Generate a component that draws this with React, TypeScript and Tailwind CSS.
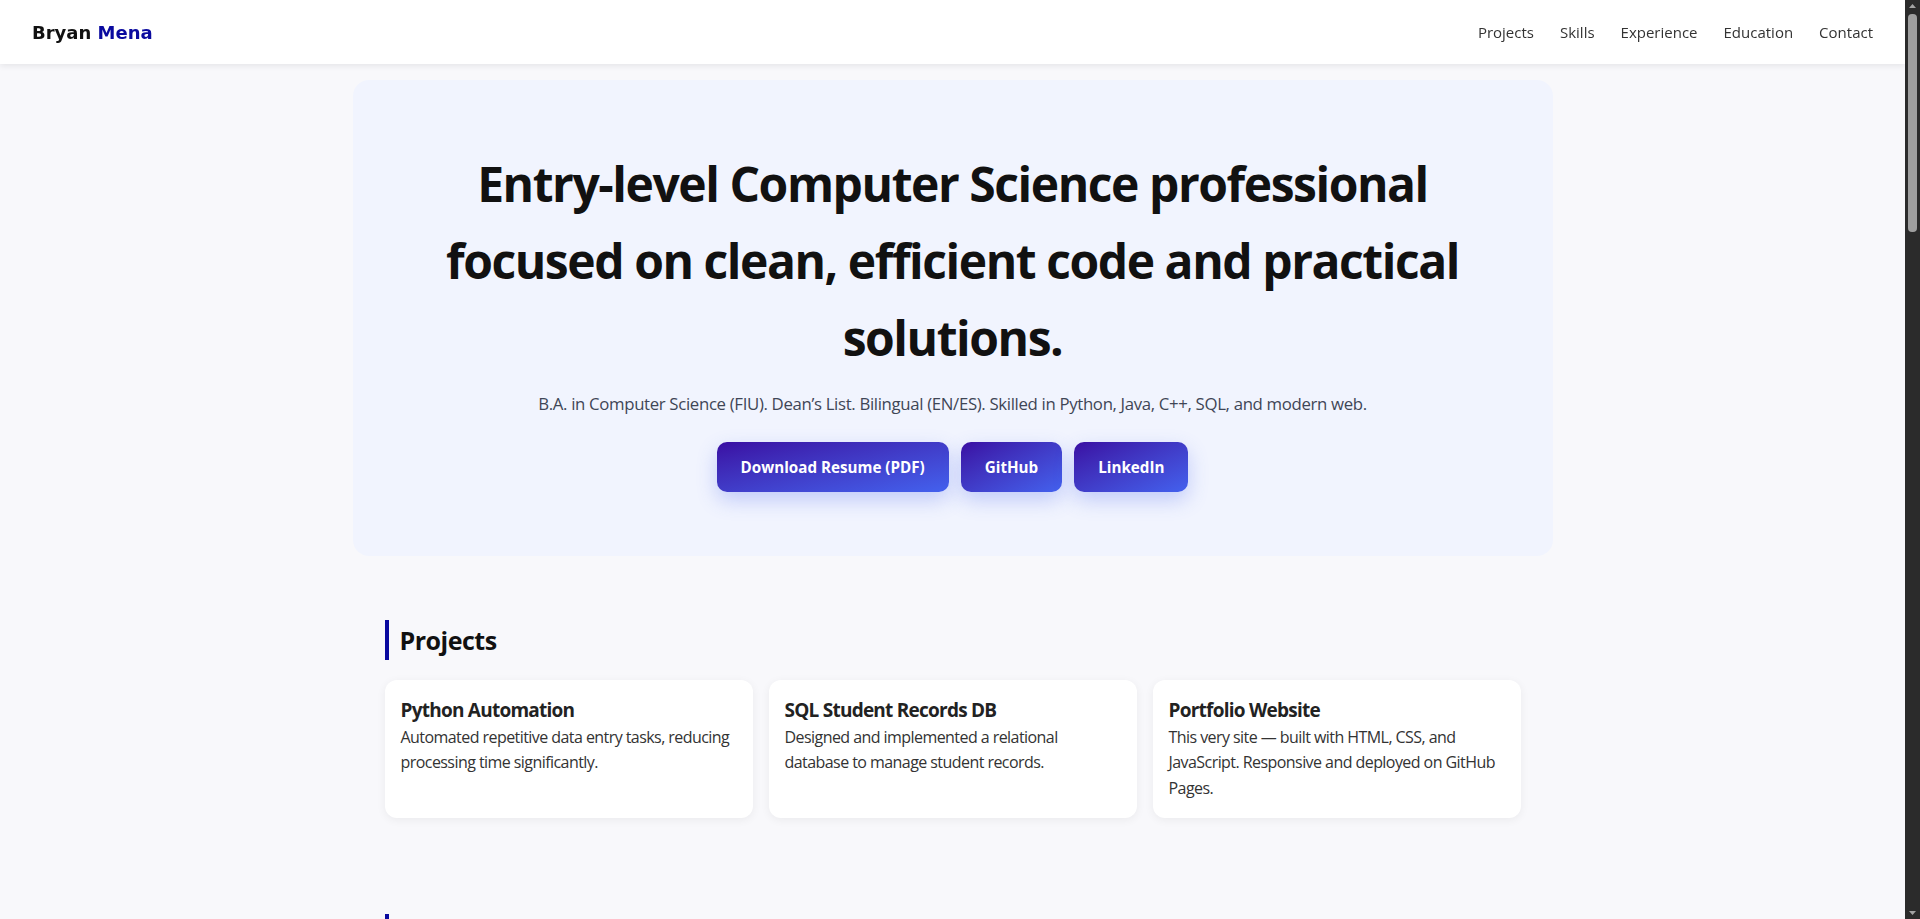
const navLinks = ["Projects", "Skills", "Experience", "Education", "Contact"];

const projects = [
  {
    title: "Python Automation",
    desc: "Automated repetitive data entry tasks, reducing processing time significantly.",
  },
  {
    title: "SQL Student Records DB",
    desc: "Designed and implemented a relational database to manage student records.",
  },
  {
    title: "Portfolio Website",
    desc: "This very site — built with HTML, CSS, and JavaScript. Responsive and deployed on GitHub Pages.",
  },
];

const skills = ["Python", "Java", "C++", "SQL", "HTML", "CSS", "JavaScript", "Git", "Linux", "Data Structures"];

const jobs = [
  {
    title: "IT Support Intern",
    place: "Florida International University",
    desc: "Helped students and staff troubleshoot hardware and software issues, and documented common fixes.",
  },
  {
    title: "Customer Service Associate",
    place: "Retail",
    desc: "Worked with customers in English and Spanish, handled transactions and trained new team members.",
  },
];

function SectionTitle({ children }: { children: string }) {
  return (
    <h2 className="mb-5 border-l-4 border-[#0a0a9f] pl-[11px] text-[25px] font-bold leading-[40px] tracking-[-0.02em] text-[#111]">
      {children}
    </h2>
  );
}

function Card({ title, desc }: { title: string; desc: string }) {
  return (
    <div className="rounded-xl bg-white p-4 shadow-[0_2px_10px_rgba(0,0,0,0.06)]">
      <h3 className="text-[19px] font-bold leading-[1.5] tracking-[-0.04em] text-[#222]">{title}</h3>
      <p className="text-[16px] leading-[1.6] tracking-[-0.035em] text-[#333]">{desc}</p>
    </div>
  );
}

// the window's dark scrollbar on the right edge
function FakeScrollbar() {
  return (
    <div className="flex h-screen w-[15px] shrink-0 flex-col items-center bg-[#2b2b2b]">
      <svg width="9" height="14" viewBox="0 0 9 14" className="shrink-0">
        <path d="M1 8 L4.5 4 L8 8 Z" fill="#a3a3a3" />
      </svg>
      <div className="h-[218px] w-[9px] shrink-0 rounded-[4px] bg-[#9f9f9f]" />
      <div className="flex-1" />
      <svg width="9" height="14" viewBox="0 0 9 14" className="shrink-0">
        <path d="M1 6 L8 6 L4.5 10 Z" fill="#a3a3a3" />
      </svg>
    </div>
  );
}

export default function App() {
  return (
    <div className="flex h-screen overflow-hidden bg-[#f8f8fb]">
      <div
        className="h-screen flex-1 overflow-y-auto text-[#222] [scrollbar-width:none]"
        style={{ fontFamily: '"Segoe UI", "Open Sans", sans-serif' }}
      >
        {/* Header */}
        <header className="sticky top-0 z-10 flex h-16 items-center justify-between bg-white px-8 shadow-[0_2px_6px_rgba(0,0,0,0.08)]">
          <a href="#" className="text-[18px] font-bold text-[#111]" style={{ fontFamily: '"DejaVu Sans", sans-serif' }}>
            Bryan <span className="text-[#0a0a9f]">Mena</span>
          </a>
          <nav className="flex gap-[26px]">
            {navLinks.map((l) => (
              <a key={l} href={`#${l.toLowerCase()}`} className="text-[15px] font-medium text-[#333]">
                {l}
              </a>
            ))}
          </nav>
        </header>

        <main className="mx-auto max-w-[1200px]">
          {/* Hero */}
          <section className="mt-4 rounded-2xl bg-[#f1f4fe] px-16 py-16 text-center">
            <h1 className="mx-auto mt-[2px] text-[48px] font-bold leading-[1.6] tracking-[-0.03em] text-[#111]">
              Entry-level Computer Science professional focused on clean, efficient code and practical solutions.
            </h1>
            <p className="mt-[15px] text-[16.8px] leading-[1.6] tracking-[-0.02em] text-[#3f4656]">
              B.A. in Computer Science (FIU). Dean’s List. Bilingual (EN/ES). Skilled in Python, Java, C++, SQL, and modern web.
            </p>
            <div className="mt-6 flex justify-center gap-3">
              {["Download Resume (PDF)", "GitHub", "LinkedIn"].map((b) => (
                <a
                  key={b}
                  href="#"
                  className="flex h-[50px] items-center rounded-[10px] bg-linear-to-br from-[#3a0ca3] to-[#4361ee] px-6 text-[15.2px] font-bold text-white shadow-[0_8px_20px_rgba(67,97,238,0.28)]"
                >
                  {b}
                </a>
              ))}
            </div>
          </section>

          {/* Projects */}
          <section id="projects" className="px-8 pb-8 pt-16">
            <SectionTitle>Projects</SectionTitle>
            <div className="grid grid-cols-3 gap-4">
              {projects.map((p) => (
                <Card key={p.title} {...p} />
              ))}
            </div>
          </section>

          {/* Skills */}
          <section id="skills" className="px-8 pb-8 pt-16">
            <SectionTitle>Skills</SectionTitle>
            <div className="flex flex-wrap gap-3">
              {skills.map((s) => (
                <span key={s} className="rounded-full bg-white px-4 py-2 text-[15px] font-medium text-[#333] shadow-[0_2px_10px_rgba(0,0,0,0.06)]">
                  {s}
                </span>
              ))}
            </div>
          </section>

          {/* Experience */}
          <section id="experience" className="px-8 pb-8 pt-16">
            <SectionTitle>Experience</SectionTitle>
            <div className="flex flex-col gap-4">
              {jobs.map((j) => (
                <div key={j.title} className="rounded-xl bg-white p-4 shadow-[0_2px_10px_rgba(0,0,0,0.06)]">
                  <h3 className="text-[19px] font-bold leading-[1.5] text-[#222]">{j.title}</h3>
                  <p className="text-[15px] text-[#555]">{j.place}</p>
                  <p className="text-[16px] leading-[1.6] text-[#333]">{j.desc}</p>
                </div>
              ))}
            </div>
          </section>

          {/* Education */}
          <section id="education" className="px-8 pb-8 pt-16">
            <SectionTitle>Education</SectionTitle>
            <Card
              title="Florida International University"
              desc="B.A. in Computer Science. Dean’s List. Coursework in data structures, algorithms, databases and software engineering."
            />
          </section>

          {/* Contact */}
          <section id="contact" className="px-8 pb-16 pt-16">
            <SectionTitle>Contact</SectionTitle>
            <div className="rounded-xl bg-white p-4 shadow-[0_2px_10px_rgba(0,0,0,0.06)]">
              <p className="text-[16px] leading-[1.6] text-[#333]">Email: bryanmena@example.com</p>
              <p className="text-[16px] leading-[1.6] text-[#333]">Location: Miami, FL</p>
            </div>
          </section>
        </main>

        <footer className="py-8 text-center text-[14px] text-[#666]">© 2025 Bryan Mena</footer>
      </div>
      <FakeScrollbar />
    </div>
  );
}
